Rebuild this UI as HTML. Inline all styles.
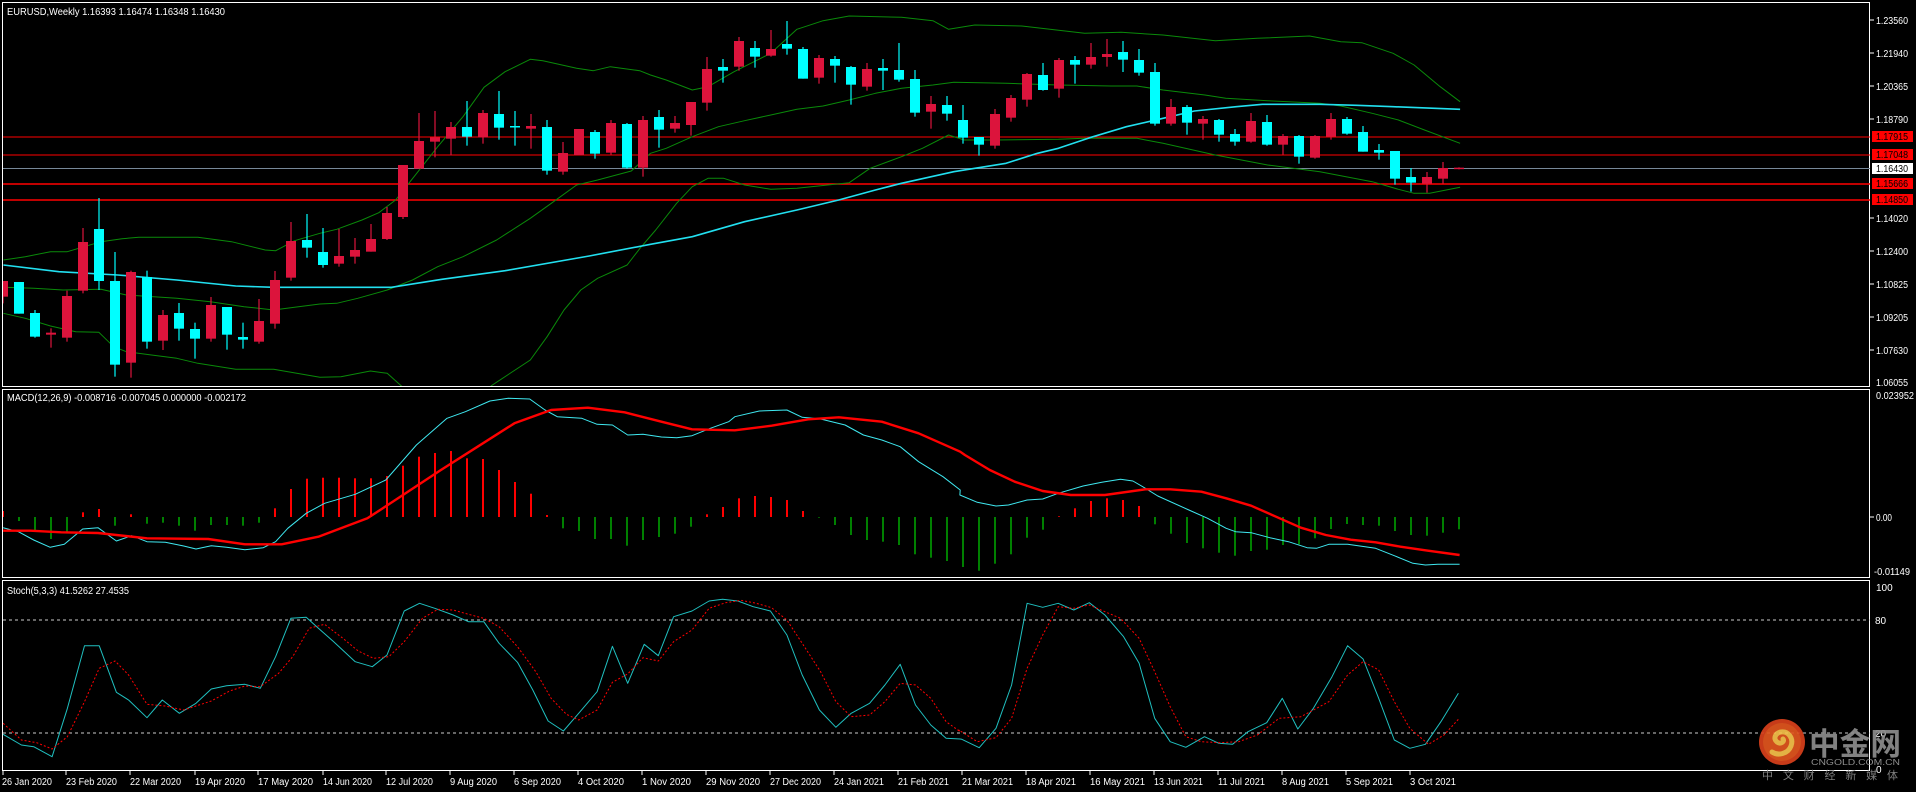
<!DOCTYPE html>
<html><head><meta charset="utf-8"><style>
html,body{margin:0;padding:0;background:#000;width:1916px;height:792px;overflow:hidden}
svg{display:block}
text{font-family:"Liberation Sans",sans-serif;fill:#fff}
.cjk{font-family:"Liberation Sans","Noto Sans CJK SC",sans-serif}
</style></head><body>
<svg id="c" width="1916" height="792" viewBox="0 0 1916 792">
<defs>
<clipPath id="cm"><rect x="3" y="3" width="1866" height="383"/></clipPath>
<clipPath id="cd"><rect x="3" y="391" width="1866" height="186"/></clipPath>
<clipPath id="cs"><rect x="3" y="582" width="1866" height="188"/></clipPath>
</defs>
<rect width="1916" height="792" fill="#000"/>
<rect x="2.5" y="2.5" width="1867" height="384" fill="none" stroke="#fff" stroke-width="1"/>
<rect x="2.5" y="389.5" width="1867" height="188" fill="none" stroke="#fff" stroke-width="1"/>
<rect x="2.5" y="580.5" width="1867" height="190" fill="none" stroke="#fff" stroke-width="1"/>
<line x1="3" y1="137" x2="1870" y2="137" stroke="#f00" stroke-width="1"/>
<line x1="3" y1="155" x2="1870" y2="155" stroke="#f00" stroke-width="1"/>
<line x1="3" y1="168.5" x2="1870" y2="168.5" stroke="#778899" stroke-width="1"/>
<line x1="3" y1="184" x2="1870" y2="184" stroke="#f00" stroke-width="1.5"/>
<line x1="3" y1="200" x2="1870" y2="200" stroke="#f00" stroke-width="1.5"/>
<line x1="3" y1="620" x2="1870" y2="620" stroke="#ccc" stroke-width="1" stroke-dasharray="3,3"/>
<line x1="3" y1="733" x2="1870" y2="733" stroke="#ccc" stroke-width="1" stroke-dasharray="3,3"/>
<g id="gm" clip-path="url(#cm)"></g>
<g id="gd" clip-path="url(#cd)"></g>
<g id="gs" clip-path="url(#cs)"></g>

<text x="7" y="15" font-size="10" textLength="218" lengthAdjust="spacingAndGlyphs">EURUSD,Weekly  1.16393 1.16474 1.16348 1.16430</text>
<text x="7" y="401" font-size="10" textLength="239" lengthAdjust="spacingAndGlyphs">MACD(12,26,9) -0.008716 -0.007045 0.000000 -0.002172</text>
<text x="7" y="594" font-size="10" textLength="122" lengthAdjust="spacingAndGlyphs">Stoch(5,3,3) 41.5262 27.4535</text>

<g font-size="10">
<text x="1876" y="24" textLength="32" lengthAdjust="spacingAndGlyphs">1.23560</text>
<text x="1876" y="57" textLength="32" lengthAdjust="spacingAndGlyphs">1.21940</text>
<text x="1876" y="90" textLength="32" lengthAdjust="spacingAndGlyphs">1.20365</text>
<text x="1876" y="123" textLength="32" lengthAdjust="spacingAndGlyphs">1.18790</text>
<text x="1876" y="222" textLength="32" lengthAdjust="spacingAndGlyphs">1.14020</text>
<text x="1876" y="255" textLength="32" lengthAdjust="spacingAndGlyphs">1.12400</text>
<text x="1876" y="288" textLength="32" lengthAdjust="spacingAndGlyphs">1.10825</text>
<text x="1876" y="321" textLength="32" lengthAdjust="spacingAndGlyphs">1.09205</text>
<text x="1876" y="354" textLength="32" lengthAdjust="spacingAndGlyphs">1.07630</text>
<text x="1876" y="386" textLength="32" lengthAdjust="spacingAndGlyphs">1.06055</text>
</g>
<g stroke="#fff" stroke-width="1">
<line x1="1870" y1="20" x2="1874" y2="20"/><line x1="1870" y1="53" x2="1874" y2="53"/>
<line x1="1870" y1="86" x2="1874" y2="86"/><line x1="1870" y1="119" x2="1874" y2="119"/>
<line x1="1870" y1="218" x2="1874" y2="218"/><line x1="1870" y1="251" x2="1874" y2="251"/>
<line x1="1870" y1="284" x2="1874" y2="284"/><line x1="1870" y1="317" x2="1874" y2="317"/>
<line x1="1870" y1="350" x2="1874" y2="350"/>
</g>
<rect x="1872" y="131" width="41" height="11" fill="#f00"/>
<text x="1876" y="140" font-size="10" textLength="32" lengthAdjust="spacingAndGlyphs" style="fill:#000">1.17915</text>
<rect x="1872" y="149" width="41" height="11" fill="#f00"/>
<text x="1876" y="158" font-size="10" textLength="32" lengthAdjust="spacingAndGlyphs" style="fill:#000">1.17048</text>
<rect x="1872" y="163" width="41" height="11" fill="#fff"/>
<text x="1876" y="172" font-size="10" textLength="32" lengthAdjust="spacingAndGlyphs" style="fill:#000">1.16430</text>
<rect x="1872" y="178" width="41" height="11" fill="#f00"/>
<text x="1876" y="187" font-size="10" textLength="32" lengthAdjust="spacingAndGlyphs" style="fill:#000">1.15666</text>
<rect x="1872" y="194" width="41" height="11" fill="#f00"/>
<text x="1876" y="203" font-size="10" textLength="32" lengthAdjust="spacingAndGlyphs" style="fill:#000">1.14850</text>

<text x="1876" y="399" font-size="10" textLength="38" lengthAdjust="spacingAndGlyphs">0.023952</text>
<text x="1876" y="521" font-size="10" textLength="16" lengthAdjust="spacingAndGlyphs">0.00</text>
<text x="1874" y="575" font-size="10" textLength="36" lengthAdjust="spacingAndGlyphs">-0.01149</text>
<line x1="1870" y1="517" x2="1874" y2="517" stroke="#fff"/>
<text x="1876" y="591" font-size="10">100</text>
<text x="1875" y="624" font-size="10">80</text>
<text x="1875" y="737" font-size="10">20</text>
<text x="1876" y="773" font-size="10">0</text>

<g font-size="10">
<text x="2" y="785" textLength="50" lengthAdjust="spacingAndGlyphs">26 Jan 2020</text>
<text x="66" y="785" textLength="51" lengthAdjust="spacingAndGlyphs">23 Feb 2020</text>
<text x="130" y="785" textLength="51" lengthAdjust="spacingAndGlyphs">22 Mar 2020</text>
<text x="195" y="785" textLength="50" lengthAdjust="spacingAndGlyphs">19 Apr 2020</text>
<text x="258" y="785" textLength="55" lengthAdjust="spacingAndGlyphs">17 May 2020</text>
<text x="323" y="785" textLength="49" lengthAdjust="spacingAndGlyphs">14 Jun 2020</text>
<text x="386" y="785" textLength="47" lengthAdjust="spacingAndGlyphs">12 Jul 2020</text>
<text x="450" y="785" textLength="47" lengthAdjust="spacingAndGlyphs">9 Aug 2020</text>
<text x="514" y="785" textLength="47" lengthAdjust="spacingAndGlyphs">6 Sep 2020</text>
<text x="578" y="785" textLength="46" lengthAdjust="spacingAndGlyphs">4 Oct 2020</text>
<text x="642" y="785" textLength="49" lengthAdjust="spacingAndGlyphs">1 Nov 2020</text>
<text x="706" y="785" textLength="54" lengthAdjust="spacingAndGlyphs">29 Nov 2020</text>
<text x="770" y="785" textLength="51" lengthAdjust="spacingAndGlyphs">27 Dec 2020</text>
<text x="834" y="785" textLength="50" lengthAdjust="spacingAndGlyphs">24 Jan 2021</text>
<text x="898" y="785" textLength="51" lengthAdjust="spacingAndGlyphs">21 Feb 2021</text>
<text x="962" y="785" textLength="51" lengthAdjust="spacingAndGlyphs">21 Mar 2021</text>
<text x="1026" y="785" textLength="50" lengthAdjust="spacingAndGlyphs">18 Apr 2021</text>
<text x="1090" y="785" textLength="55" lengthAdjust="spacingAndGlyphs">16 May 2021</text>
<text x="1154" y="785" textLength="49" lengthAdjust="spacingAndGlyphs">13 Jun 2021</text>
<text x="1218" y="785" textLength="47" lengthAdjust="spacingAndGlyphs">11 Jul 2021</text>
<text x="1282" y="785" textLength="47" lengthAdjust="spacingAndGlyphs">8 Aug 2021</text>
<text x="1346" y="785" textLength="47" lengthAdjust="spacingAndGlyphs">5 Sep 2021</text>
<text x="1410" y="785" textLength="46" lengthAdjust="spacingAndGlyphs">3 Oct 2021</text>
</g>
<g stroke="#fff"><path d="M3 771v4M66 771v4M130 771v4M195 771v4M258 771v4M323 771v4M386 771v4M450 771v4M514 771v4M578 771v4M642 771v4M706 771v4M770 771v4M834 771v4M898 771v4M962 771v4M1026 771v4M1090 771v4M1154 771v4M1218 771v4M1282 771v4M1346 771v4M1410 771v4"/></g>

<g opacity="0.92">
<circle cx="1782" cy="742" r="23" fill="#d8401c"/>
<circle cx="1782" cy="742" r="19" fill="#e2561f"/>
<path d="M1772 752c6 4 16 2 19-6 3-8-3-15-10-14-6 1-8 7-4 10 4 3 8-1 6-3" fill="none" stroke="#f7c24a" stroke-width="5" stroke-linecap="round"/>
<text x="1809" y="755" class="cjk" font-size="31" font-weight="bold" style="fill:#8c8c8c" textLength="92" lengthAdjust="spacingAndGlyphs">中金网</text>
<text x="1811" y="765" font-size="8.5" style="fill:#9a9a9a" textLength="89" lengthAdjust="spacingAndGlyphs">CNGOLD.COM.CN</text>
<text x="1762" y="779" class="cjk" font-size="11" style="fill:#8a8a8a" textLength="136" lengthAdjust="spacing">中文财经新媒体</text>
</g>
</svg>
<script>
var gm=document.getElementById('gm'),gd=document.getElementById('gd'),gs=document.getElementById('gs');
function add(g,s){g.insertAdjacentHTML('beforeend',s);}
var C=[[1,843,890,843,910],[0,846,941,846,941],[0,939,1010,930,1013],[1,998,1004,985,1043],[1,888,1013,872,1025],[1,726,872,684,880],[0,687,843,594,870],[0,843,1094,756,1130],[1,816,1088,812,1133],[0,831,1025,812,1046],[1,945,1022,930,1050],[0,939,986,909,1022],[0,987,1016,968,1076],[1,915,1016,891,1025],[0,921,1004,921,1049],[0,1011,1019,968,1046],[1,963,1025,897,1031],[1,840,971,813,986],[1,723,833,666,842],[0,720,743,642,773],[0,756,795,684,803],[1,768,791,687,800],[1,750,770,714,791],[1,717,755,672,755],[1,639,717,621,720],[1,495,651,495,657],[1,423,506,339,506],[1,412,425,333,472],[1,381,416,366,466],[0,381,410,303,437],[1,339,412,330,431],[0,342,383,273,419],[0,378,381,333,437],[1,378,386,342,446],[0,381,512,360,524],[1,459,515,426,524],[1,387,465,387,465],[0,396,461,390,476],[1,369,458,360,464],[0,372,503,369,506],[1,360,503,348,530],
[0,351,389,330,443],[1,369,386,348,398],[1,306,375,306,407],[1,207,308,171,332],[0,201,212,177,248],[1,123,200,111,212],[0,144,170,123,203],[1,147,167,90,170],[0,132,146,63,164],[0,147,236,141,236],[1,174,233,165,251],[0,177,197,168,248],[0,201,254,198,314],[1,207,260,189,272],[0,204,212,177,270],[0,210,239,129,245],[0,237,338,210,350],[1,312,335,288,386],[0,315,341,288,362],[0,360,413,315,431],[0,411,434,411,467],[1,342,437,327,446],[1,294,353,285,365],[1,222,299,219,320],[0,225,270,189,272],[1,180,266,174,293],[0,180,194,168,251],[1,171,194,129,206],[1,162,171,117,200],[0,156,179,123,216],[0,180,218,147,227],[0,216,371,189,377],[1,321,371,297,377],[0,321,368,315,404],[1,357,371,348,419],[0,360,404,357,425],[0,402,425,387,437],[1,363,425,339,428],[0,366,434,345,437],[1,408,434,402,464],[0,408,470,405,491],[1,408,473,405,476],[1,357,410,339,419],[0,357,401,351,404],[0,396,455,378,455],[0,450,458,432,479],[0,453,536,453,554],[0,531,548,504,575],[1,531,551,516,578],[1,504,536,486,551],[1,503,506,502,508]];
var s='';
C.forEach(function(c,i){var x=3+16*i,col=c[0]?'#dc143c':'#00ffff';
var t=c[1]/3,b=c[2]/3,wt=c[3]/3,wb=c[4]/3;
s+='<line x1="'+x+'" y1="'+wt+'" x2="'+x+'" y2="'+wb+'" stroke="'+col+'" stroke-width="1.2"/>';
s+='<rect x="'+(x-5)+'" y="'+t+'" width="10" height="'+Math.max(1.5,b-t)+'" fill="'+col+'"/>';});
function conv(a,sx,ox,oy){var r=[];for(var i=0;i<a.length;i+=2)r.push((ox+a[i]/sx).toFixed(1)+','+(oy+a[i+1]/3).toFixed(1));return r.join(' ');}
function pl(g,pts,col,w,dash){add(g,'<polyline points="'+pts+'" fill="none" stroke="'+col+'" stroke-width="'+w+'"'+(dash?' stroke-dasharray="'+dash+'"':'')+' stroke-linejoin="round"/>');}
var z3=2.376,z4=1.912;
var up3=[8,780,60,770,120,755,160,755,240,725,290,716,330,712,470,712,550,725,630,750,655,752,700,722,760,700,800,688,860,660,900,638,940,600,990,520,1040,440,1100,350,1150,262,1200,215,1260,178,1290,182,1370,205,1410,212,1450,200,1520,212];
var up4=[20,225,50,240,100,270,130,260,180,215,250,160,300,88,350,62,400,48,500,52,560,62,590,88,640,75,730,78,850,100,920,97,1000,105,1100,122,1180,115,1280,108,1340,125,1380,128,1440,160,1480,195,1530,260,1568,305];
var md3=[8,862,80,865,150,870,240,868,300,885,420,895,500,905,580,920,650,930,700,922,760,912,800,910,850,895,920,870,980,840,1040,800,1100,770,1180,720,1260,655,1310,610,1370,555,1420,540,1500,513];
var md4=[20,460,50,445,100,410,150,380,200,362,250,345,300,328,350,318,400,300,450,280,500,265,560,255,600,247,700,250,800,255,900,258,950,258,1000,270,1080,285,1120,295,1200,302,1300,310,1340,318,1400,340,1450,360,1500,390,1568,430];
var lo3=[8,940,60,955,120,978,180,995,235,997,270,1040,300,1055,360,1065,420,1075,470,1090,560,1108,650,1108,760,1132,810,1130,880,1113,920,1120,960,1165];
var lo3b=[1150,1175,1170,1155,1260,1080,1300,1010,1340,930,1380,870,1420,835,1490,795];
var lo4=[0,745,30,690,70,610,100,560,130,535,160,535,200,555,250,568,300,565,400,548,440,505,500,470,540,445,590,405,620,420,680,420,800,418,850,415,950,415,1000,430,1100,465,1200,495,1300,515,1400,545,1450,568,1480,580,1510,580,1568,562];
var ma3=[8,795,140,815,280,825,420,840,560,858,650,862,930,862,1050,838,1200,812,1400,768];
var ma4=[20,733,100,710,200,665,300,630,380,600,450,570,500,550,600,515,700,490,760,460,800,445,860,413,930,380,1000,355,1060,333,1140,320,1190,313,1300,313,1370,316,1440,320,1568,328];
var G='#0a8a0a';
pl(gm,conv(up3,z3,0,0)+' '+conv(up4,z4,640,0),G,1);
pl(gm,conv(md3,z3,0,0)+' '+conv(md4,z4,640,0),G,1);
pl(gm,conv(lo3,z3,0,0),G,1);
pl(gm,conv(lo3b,z3,0,0)+' '+conv(lo4,z4,640,0),G,1);
pl(gm,conv(ma3,z3,0,0)+' '+conv(ma4,z4,640,0),'#22e0f0',1.6);
add(gm,s);
var H=[[1,378],[0,408],[0,440],[0,462],[0,440],[1,382],[1,372],[0,422],[1,388],[0,416],[0,413],[0,422],[0,437],[0,420],[0,420],[0,422],[0,413],[1,370],[1,312],[1,281],[1,278],[1,278],[1,280],[1,280],[1,273],[1,242],[1,215],[1,204],[1,198],[1,220],[1,222],[1,255],[1,291],[1,326],[1,390],[0,430],[0,438],[0,462],[0,462],[0,482],[0,465],[0,456],[0,446],[0,425],[1,388],[1,366],[1,340],[1,333],[1,336],[1,345],[1,378],[0,398],[0,420],[0,450],[0,465],[0,470],[0,480],[0,508],[0,518],[0,528],[0,546],[0,557],[0,536],[0,508],[0,458],[0,434],[1,394],[1,370],[1,348],[1,340],[1,345],[1,363],[0,418],[0,446],[0,474],[0,490],[0,503],[0,512],[0,498],[0,494],[0,480],[0,478],[0,460],[0,432],[0,417],[0,420],[0,422],[0,438],[0,450],[0,452],[0,443],[0,433]];
var h='';H.forEach(function(v,i){var x=3+16*i,y=385+v[1]/3;h+='<line x1="'+x+'" y1="517" x2="'+x+'" y2="'+y.toFixed(1)+'" stroke="'+(v[0]?'#ff0000':'#008000')+'" stroke-width="2"/>';});
add(gd,h);
var z5=1.633,z6=1.607;
var mc5=[5,428,30,440,55,465,82,487,105,478,135,432,160,428,190,468,215,452,240,470,270,472,300,483,320,492,345,482,370,487,400,494,430,488,450,470,470,430,500,385,530,355,580,328,630,285,680,180,730,100,760,80,800,48,830,40,865,42,890,75,910,95,950,100,975,118,1000,120,1025,150,1050,148,1080,156,1105,158,1130,152,1160,130,1190,110,1200,95,1240,78,1285,75,1310,97,1340,102,1380,120,1410,150,1440,165,1470,185,1500,230,1540,275,1568,315];
var mc6=[32,330,60,352,90,363,110,360,140,345,165,342,190,325,230,303,260,292,290,283,310,288,330,310,350,333,400,375,430,400,460,430,475,440,500,443,530,458,560,470,590,488,605,490,625,478,655,478,700,490,730,512,760,535,780,540,800,538,835,538];
var sg5=[5,437,50,437,100,442,160,444,240,460,340,462,400,478,460,478,520,455,600,400,650,340,720,255,780,185,840,115,900,75,960,68,1020,82,1080,110,1130,133,1200,136,1260,122,1320,103,1370,97,1440,110,1500,145,1568,200];
var sg6=[40,210,80,255,120,290,165,318,210,330,265,330,330,313,370,313,420,320,460,340,500,362,540,395,580,428,620,450,660,464,700,472,740,485,780,496,835,510];
pl(gd,conv(mc5,z5,0,385)+' '+conv(mc6,z6,940,385),'#3fe8f0',1);
pl(gd,conv(sg5,z5,0,385)+' '+conv(sg6,z6,940,385),'#ff0000',2.4);
var sc7=[5,478,35,510,55,515,85,545,110,400,138,212,162,212,190,352,210,375,240,428,265,375,293,415,320,385,345,342,370,332,400,328,425,340,450,245,475,130,500,127,520,160,545,200,580,260,608,275,632,240,660,108,685,85,710,100,740,120,765,140,790,140,815,205,845,262,870,345,895,438,920,468,945,415,975,350,1000,214,1025,325,1052,208,1075,242,1100,125,1130,108,1158,78,1180,73,1205,78,1230,95,1258,108,1285,180,1310,300,1338,405,1365,457,1390,415,1420,385,1445,330,1470,268,1495,390,1520,450,1545,490,1568,492];
var sc8=[35,493,63,518,90,460,115,330,140,85,165,97,190,85,215,105,240,83,265,120,295,185,320,265,345,430,370,500,395,517,425,485,448,505,470,508,495,470,525,443,550,370,575,462,600,400,630,305,655,212,680,252,705,370,730,495,755,520,780,508,805,440,833,355];
var sr7=[5,445,35,495,60,503,85,522,110,485,138,380,162,280,188,258,210,300,240,388,270,393,300,405,345,378,375,348,400,333,425,335,455,295,478,245,505,160,530,148,560,190,585,228,610,250,635,245,660,200,690,130,715,103,740,105,765,118,790,130,815,155,845,215,875,290,900,370,925,418,945,435,975,405,1000,322,1025,297,1050,248,1075,258,1100,200,1130,165,1158,100,1185,83,1210,76,1235,85,1260,98,1285,135,1310,205,1340,290,1365,380,1390,425,1420,420,1445,380,1470,325,1495,330,1520,370,1545,440,1568,470];
var sr8=[30,465,60,500,90,488,115,430,140,280,165,180,190,95,215,100,240,90,265,110,290,130,320,190,345,290,370,395,395,485,420,500,450,503,480,500,510,480,545,430,580,425,625,380,655,300,680,260,705,285,730,380,755,460,785,508,810,480,833,433];
pl(gs,conv(sc7,z5,0,575)+' '+conv(sc8,z6,940,575),'#20c0c0',1);
pl(gs,conv(sr7,z5,0,575)+' '+conv(sr8,z6,940,575),'#ff0000',1,'2,2');
</script>
</body></html>
